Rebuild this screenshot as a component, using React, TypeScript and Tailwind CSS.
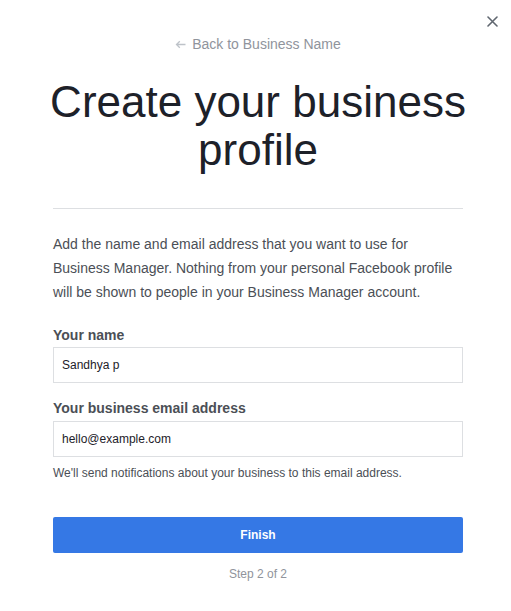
import React from 'react';

const App = () => {
  return (
    <div className="relative min-h-screen w-[511px] bg-white font-['Liberation_Sans',Arial,sans-serif]">
      {/* Close */}
      <button className="absolute right-[11px] top-[14px] p-0.5 text-[#606770]">
        <svg width="11" height="11" viewBox="0 0 11 11" fill="none" stroke="currentColor" strokeWidth="1.6" strokeLinecap="round">
          <path d="M1 1L10 10M10 1L1 10" />
        </svg>
      </button>

      <div className="ml-[53px] w-[410px] pt-[35px]">
        {/* Back link */}
        <div className="flex items-center justify-center gap-[6px] text-[14px] leading-[18px] text-[#90949c]">
          <svg width="11" height="9" viewBox="0 0 11 9" fill="none" stroke="#bec3c9" strokeWidth="1.3">
            <path d="M10.5 4.5H1.5M4.8 1.2L1.5 4.5L4.8 7.8" />
          </svg>
          <span>Back to Business Name</span>
        </div>

        {/* Title */}
        <h1 className="-mx-[20px] mt-[25px] text-center text-[44px] leading-[48px] text-[#1d2129]">
          Create your business<br />profile
        </h1>

        <div className="mt-[34px] border-t border-[#dddfe2]" />

        <p className="mt-[23px] text-[14px] leading-[24px] text-[#4b4f56]">
          Add the name and email address that you want to use for Business Manager. Nothing from your personal Facebook profile will be shown to people in your Business Manager account.
        </p>

        {/* Name */}
        <label className="mt-[22px] block text-[14px] font-bold leading-[18px] text-[#4b4f56]">Your name</label>
        <div className="mt-[3px] flex h-[36px] items-center border border-[#dddfe2] px-[8px] text-[12px] text-[#1d2129]">
          Sandhya p
        </div>

        {/* Email */}
        <label className="mt-[16px] block text-[14px] font-bold leading-[18px] text-[#4b4f56]">Your business email address</label>
        <div className="mt-[4px] flex h-[36px] items-center border border-[#dddfe2] px-[8px] text-[12px] text-[#1d2129]">
          hello@example.com
        </div>
        <p className="mt-[8px] text-[12px] leading-[16px] text-[#4b4f56]">
          We'll send notifications about your business to this email address.
        </p>

        <button className="mt-[36px] flex h-[36px] w-full items-center justify-center rounded-[2px] bg-[#3578e5] text-[12px] font-bold text-white">
          Finish
        </button>

        <p className="mt-[13px] text-center text-[12px] leading-[16px] text-[#90949c]">Step 2 of 2</p>
      </div>
    </div>
  );
};

export default App;
